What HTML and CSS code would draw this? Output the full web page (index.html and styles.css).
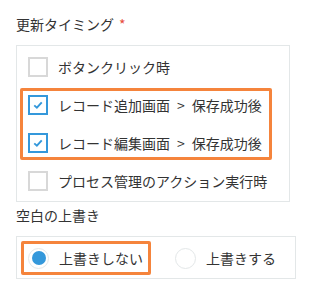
FILE: index.html
```html
<!DOCTYPE html>
<html lang="ja">
<head>
    <meta charset="UTF-8">
    <title>更新タイミング</title>
    <link rel="stylesheet" href="styles.css">
</head>
<body>

    <div class="field-label">更新タイミング<span class="required">*</span></div>
    <div class="group checks">
        <div class="option">
            <span class="checkbox"></span>
            <span>ボタンクリック時</span>
        </div>
        <div class="highlight hl-checks">
            <div class="option">
                <span class="checkbox checked">
                    <svg viewBox="0 0 16 16" width="12" height="12"><path d="M3 8.5 L6.5 11.5 L13 4.5" fill="none" stroke="#3498db" stroke-width="2.6"/></svg>
                </span>
                <span>レコード追加画面<span class="sep">&gt;</span>保存成功後</span>
            </div>
            <div class="option">
                <span class="checkbox checked">
                    <svg viewBox="0 0 16 16" width="12" height="12"><path d="M3 8.5 L6.5 11.5 L13 4.5" fill="none" stroke="#3498db" stroke-width="2.6"/></svg>
                </span>
                <span>レコード編集画面<span class="sep">&gt;</span>保存成功後</span>
            </div>
        </div>
        <div class="option">
            <span class="checkbox"></span>
            <span>プロセス管理のアクション実行時</span>
        </div>
    </div>

    <div class="field-label">空白の上書き</div>
    <div class="group radios">
        <div class="highlight hl-radio">
            <div class="option">
                <span class="radio selected"></span>
                <span>上書きしない</span>
            </div>
        </div>
        <div class="option">
            <span class="radio"></span>
            <span>上書きする</span>
        </div>
    </div>

</body>
</html>
```

FILE: styles.css
```css
body {
    margin: 0;
    padding: 14px 16px 0 16px;
    font-family: "Noto Sans CJK JP", "Noto Sans", sans-serif;
    font-size: 14px;
    color: #333;
    background: #fff;
}

.field-label {
    line-height: 20px;
    margin-bottom: 11px;
}

.required {
    color: #e74c3c;
    margin-left: 5px;
}

.group {
    border: 1px solid #e3e7e8;
    box-sizing: border-box;
}

.checks {
    width: 274px;
    padding: 11px 11px 10px 11px;
    margin-bottom: 3px;
}

.radios {
    width: 280px;
    padding: 4px 4px 3px 4px;
    display: flex;
    align-items: center;
}

.option {
    display: flex;
    align-items: center;
    gap: 10px;
    height: 20px;
    line-height: 20px;
    white-space: nowrap;
}

.sep {
    margin: 0 7px;
}

.highlight {
    border: 3px solid #f5843c;
    border-radius: 2px;
}

.hl-checks {
    margin: 11px 6px 11px -8px;
    padding: 4px 0 4px 5px;
}

.hl-checks .option + .option {
    margin-top: 18px;
}

.hl-radio {
    padding: 4px 5px 4px 4px;
    margin-right: 24px;
}

.checkbox {
    width: 20px;
    height: 20px;
    box-sizing: border-box;
    border: 2px solid #d8d8d8;
    display: flex;
    align-items: center;
    justify-content: center;
}

.checkbox.checked {
    border-color: #3498db;
}

.radio {
    width: 21px;
    height: 21px;
    box-sizing: border-box;
    border: 1px solid #e3e7e8;
    border-radius: 50%;
    display: flex;
    align-items: center;
    justify-content: center;
}

.radio.selected::after {
    content: "";
    width: 14px;
    height: 14px;
    border-radius: 50%;
    background: #3498db;
}
```
